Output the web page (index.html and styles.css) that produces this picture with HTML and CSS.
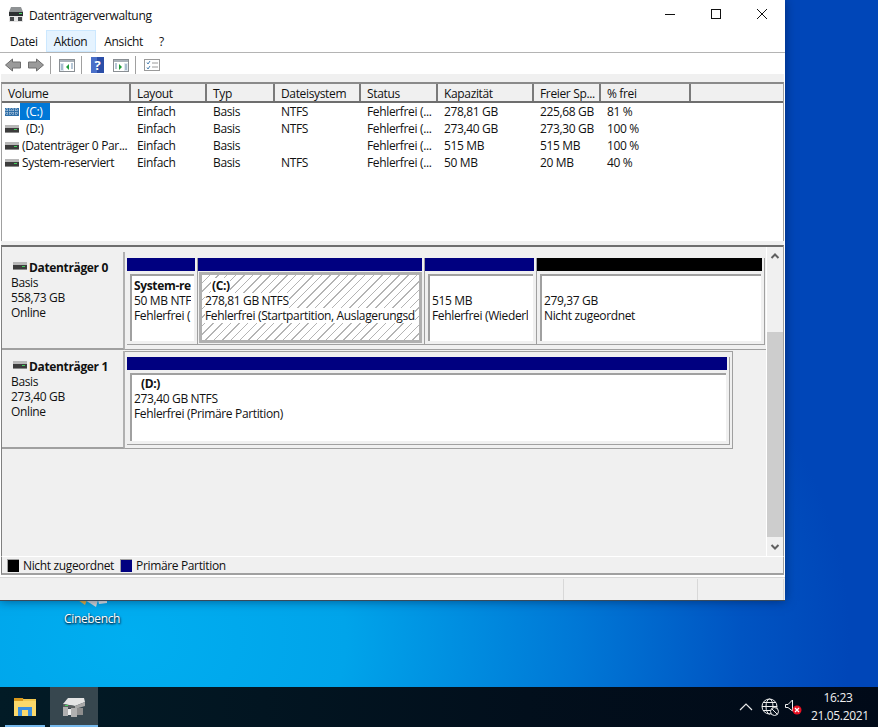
FILE: index.html
```html
<!DOCTYPE html>
<html lang="de">
<head>
    <title>Datenträgerverwaltung</title>
    <link rel="stylesheet" href="styles.css">
</head>
<body>
    <svg class="defs" width="0" height="0">
        <symbol id="drive" viewBox="0 0 14 8">
            <rect x="0" y="0" width="14" height="3" fill="#b8b8b8"/>
            <rect x="0" y="3" width="14" height="4" fill="#3c3c3c"/>
            <rect x="9" y="4" width="3" height="1" fill="#3fd05a"/>
            <rect x="0" y="7" width="14" height="1" fill="#8a8a8a"/>
        </symbol>
    </svg>

    <div class="desktop">
        <!-- Desktop icon behind the window -->
        <svg class="cine-icon" width="32" height="8" viewBox="0 0 32 8">
            <path d="M0 0 L7 5 L9 0Z" fill="#e8b040"/>
            <path d="M7 0 L18 7 L20 0Z" fill="#d8d8d8"/>
            <path d="M20 0 L21 4 L29 3 L29 0Z" fill="#e8e8e8"/>
        </svg>
        <div class="cine-label">Cinebench</div>

        <div class="window">
            <div class="titlebar">
                <svg class="app-icon" width="16" height="16" viewBox="0 0 16 16">
                    <path d="M3 0 H13 L15 5 H1Z" fill="#8f9294"/>
                    <rect x="1" y="5" width="14" height="4" fill="#2c2f31"/>
                    <rect x="11" y="6" width="3" height="1" fill="#42d860"/>
                    <rect x="1" y="9" width="14" height="6" fill="#e4e4e4"/>
                    <rect x="2" y="10" width="4" height="4" fill="#45484a"/>
                    <rect x="10" y="10" width="4" height="4" fill="#45484a"/>
                </svg>
                <span class="title-text">Datenträgerverwaltung</span>
                <div class="win-buttons">
                    <svg width="46" height="30" viewBox="0 0 46 30"><path d="M18 14.5 H28" stroke="#111" fill="none"/></svg>
                    <svg width="46" height="30" viewBox="0 0 46 30"><rect x="18.5" y="9.5" width="9" height="9" stroke="#111" fill="none"/></svg>
                    <svg width="46" height="30" viewBox="0 0 46 30"><path d="M18 9 L28 19 M28 9 L18 19" stroke="#111" fill="none"/></svg>
                </div>
            </div>

            <div class="menubar">
                <span class="menu-item">Datei</span>
                <span class="menu-item active">Aktion</span>
                <span class="menu-item">Ansicht</span>
                <span class="menu-item">?</span>
            </div>

            <div class="toolbar">
                <svg class="tool tool-back" width="16" height="14" viewBox="0 0 16 14"><path d="M0.5 7 L7.5 1 V4 H15.5 V10 H7.5 V13Z" fill="#9a9a9a" stroke="#6e6e6e"/></svg>
                <svg class="tool" width="16" height="14" viewBox="0 0 16 14"><path d="M15.5 7 L8.5 1 V4 H0.5 V10 H8.5 V13Z" fill="#9a9a9a" stroke="#6e6e6e"/></svg>
                <span class="tool-sep"></span>
                <svg class="tool" width="16" height="13" viewBox="0 0 16 13"><rect x="0.5" y="0.5" width="15" height="12" fill="#fff" stroke="#8a8f94"/><rect x="1" y="1" width="14" height="2" fill="#a9b2ba"/><rect x="1" y="4" width="4" height="8" fill="#dfe8ef"/><path d="M10 5 V11 L7 8Z" fill="#1f9d3a"/><path d="M12 5 H14 M12 7 H14 M12 9 H14 M2 6 H4 M2 8 H4 M2 10 H4" stroke="#6f8fae"/></svg>
                <span class="tool-sep"></span>
                <svg class="tool tool-help" width="13" height="16" viewBox="0 0 13 16"><rect width="13" height="16" fill="#2b4ea8"/><rect x="0" y="0" width="6" height="16" fill="#4a6fc8"/><text x="6.5" y="13" class="help-mark">?</text></svg>
                <svg class="tool" width="16" height="13" viewBox="0 0 16 13"><rect x="0.5" y="0.5" width="15" height="12" fill="#fff" stroke="#8a8f94"/><rect x="1" y="1" width="14" height="2" fill="#a9b2ba"/><rect x="11" y="4" width="4" height="8" fill="#dfe8ef"/><path d="M6 5 V11 L9 8Z" fill="#1f9d3a"/><path d="M2 5 H4 M2 7 H4 M2 9 H4 M12 6 H14 M12 8 H14 M12 10 H14" stroke="#6f8fae"/></svg>
                <span class="tool-sep"></span>
                <svg class="tool" width="16" height="12" viewBox="0 0 16 12"><rect x="0.5" y="0.5" width="15" height="11" fill="#fff" stroke="#9a9a9a"/><path d="M3 3.5 L4 5 L6 2 M3 8.5 L4 10 L6 7" stroke="#4a7fb0" fill="none"/><path d="M8 4 H14 M8 8 H14" stroke="#9a9a9a"/></svg>
            </div>

            <!-- Volume list -->
            <div class="volume-list">
                <div class="list-row list-head">
                    <div>Volume</div>
                    <div>Layout</div>
                    <div>Typ</div>
                    <div>Dateisystem</div>
                    <div>Status</div>
                    <div>Kapazität</div>
                    <div>Freier Sp...</div>
                    <div>% frei</div>
                    <div></div>
                </div>
                <div class="list-row">
                    <div class="vol-cell">
                        <svg class="vol-icon" width="14" height="8"><rect width="14" height="8" fill="#2f6fa8"/><path d="M0 2 H14 M0 5 H14 M2 0 V8 M5 0 V8 M8 0 V8 M11 0 V8" stroke="#c8d8e8" stroke-dasharray="1 1"/></svg>
                        <span class="vol-selected">(C:)</span>
                    </div>
                    <div>Einfach</div><div>Basis</div><div>NTFS</div><div>Fehlerfrei (...</div><div>278,81 GB</div><div>225,68 GB</div><div>81 %</div><div></div>
                </div>
                <div class="list-row">
                    <div class="vol-cell"><svg class="vol-icon" width="14" height="8"><use href="#drive"/></svg><span class="vol-name-drive">(D:)</span></div>
                    <div>Einfach</div><div>Basis</div><div>NTFS</div><div>Fehlerfrei (...</div><div>273,40 GB</div><div>273,30 GB</div><div>100 %</div><div></div>
                </div>
                <div class="list-row">
                    <div class="vol-cell"><svg class="vol-icon" width="14" height="8"><use href="#drive"/></svg><span class="vol-name">(Datenträger 0 Par...</span></div>
                    <div>Einfach</div><div>Basis</div><div></div><div>Fehlerfrei (...</div><div>515 MB</div><div>515 MB</div><div>100 %</div><div></div>
                </div>
                <div class="list-row">
                    <div class="vol-cell"><svg class="vol-icon" width="14" height="8"><use href="#drive"/></svg><span class="vol-name">System-reserviert</span></div>
                    <div>Einfach</div><div>Basis</div><div>NTFS</div><div>Fehlerfrei (...</div><div>50 MB</div><div>20 MB</div><div>40 %</div><div></div>
                </div>
            </div>

            <!-- Graphical disk view -->
            <div class="disk-view">
                <div class="disk-list">
                    <div class="disk-row">
                        <div class="disk-info">
                            <div class="disk-name"><svg width="14" height="8"><use href="#drive"/></svg><b>Datenträger 0</b></div>
                            <div>Basis</div>
                            <div>558,73 GB</div>
                            <div>Online</div>
                        </div>
                        <div class="disk-parts full">
                            <div class="part part-sys">
                                <div class="strip"></div>
                                <div class="part-body"><b>System-re</b><span>50 MB NTF</span><span>Fehlerfrei (</span></div>
                            </div>
                            <div class="part part-c selected">
                                <div class="strip"></div>
                                <div class="part-body"><b class="drive-letter">(C:)</b><span>278,81 GB NTFS</span><span>Fehlerfrei (Startpartition, Auslagerungsd</span></div>
                            </div>
                            <div class="part part-rec">
                                <div class="strip"></div>
                                <div class="part-body"><b>&nbsp;</b><span>515 MB</span><span>Fehlerfrei (Wiederl</span></div>
                            </div>
                            <div class="part part-free">
                                <div class="strip black"></div>
                                <div class="part-body"><b>&nbsp;</b><span>279,37 GB</span><span>Nicht zugeordnet</span></div>
                            </div>
                        </div>
                    </div>
                    <div class="disk-row">
                        <div class="disk-info">
                            <div class="disk-name"><svg width="14" height="8"><use href="#drive"/></svg><b>Datenträger 1</b></div>
                            <div>Basis</div>
                            <div>273,40 GB</div>
                            <div>Online</div>
                        </div>
                        <div class="disk-parts short">
                            <div class="part part-d">
                                <div class="strip"></div>
                                <div class="part-body"><b class="drive-letter">(D:)</b><span>273,40 GB NTFS</span><span>Fehlerfrei (Primäre Partition)</span></div>
                            </div>
                        </div>
                    </div>
                </div>
                <div class="scrollbar">
                    <svg width="16" height="17" viewBox="0 0 16 17"><path d="M4.5 11 L8 7.5 L11.5 11" stroke="#606060" stroke-width="2" fill="none"/></svg>
                    <div class="scroll-gap"></div>
                    <div class="scroll-thumb"></div>
                    <div class="scroll-rest"></div>
                    <svg width="16" height="17" viewBox="0 0 16 17"><path d="M4.5 6 L8 9.5 L11.5 6" stroke="#606060" stroke-width="2" fill="none"/></svg>
                </div>
            </div>

            <div class="legend">
                <span class="swatch black"></span><span class="legend-text">Nicht zugeordnet</span>
                <span class="swatch navy"></span><span class="legend-text">Primäre Partition</span>
            </div>

            <div class="statusbar">
                <div class="status-main"></div>
                <div class="status-mid"></div>
                <div class="status-end"></div>
            </div>
        </div>

        <!-- Taskbar -->
        <div class="taskbar">
            <div class="task task-explorer">
                <svg width="22" height="18" viewBox="0 0 22 18">
                    <path d="M0 0 H9 L10 3 H0Z" fill="#d8981c"/>
                    <rect x="9" y="1" width="13" height="2" fill="#f0c850"/>
                    <rect x="0" y="3" width="22" height="15" fill="#fbd96a"/>
                    <rect x="4" y="9" width="14" height="3" fill="#3a8fe0"/>
                    <rect x="4" y="12" width="4" height="6" fill="#3a8fe0"/>
                    <rect x="14" y="12" width="4" height="6" fill="#3a8fe0"/>
                </svg>
            </div>
            <div class="task task-active">
                <svg width="24" height="20" viewBox="0 0 24 20">
                    <path d="M6 1 H22 L23 5 L13 9 L1 7Z" fill="#e4e4e4"/>
                    <path d="M1 7 L13 9 V12 L1 10Z" fill="#5a5f60"/>
                    <rect x="3" y="8" width="3" height="1" fill="#42d860"/>
                    <path d="M13 9 L23 5 V9 L13 12Z" fill="#a8a8a8"/>
                    <path d="M1 10 H6 V19 H1Z M9 11 H15 V20 H9Z" fill="#b0b0b0"/>
                    <rect x="6" y="12" width="3" height="6" fill="#ececec"/>
                    <rect x="15" y="11" width="6" height="7" fill="#8e8e8e"/>
                </svg>
            </div>
            <div class="tray">
                <svg class="tray-chevron" width="14" height="8" viewBox="0 0 14 8"><path d="M1 7 L7 1 L13 7" stroke="#e8e8e8" stroke-width="1.2" fill="none"/></svg>
                <svg class="tray-globe" width="18" height="18" viewBox="0 0 18 18">
                    <g stroke="#f0f0f0" fill="none">
                        <circle cx="8.5" cy="8.5" r="7.5"/>
                        <ellipse cx="8.5" cy="8.5" rx="3.5" ry="7.5"/>
                        <path d="M1 8.5 H16 M2 4.5 H15 M2 12.5 H15"/>
                    </g>
                    <circle cx="13.5" cy="13.5" r="4" fill="#06101c" stroke="#f0f0f0"/>
                    <path d="M11 11 L16 16" stroke="#f0f0f0"/>
                </svg>
                <svg class="tray-sound" width="17" height="16" viewBox="0 0 17 16">
                    <path d="M0.5 5.5 H3 L7.5 1 V12 L3 8.5 H0.5Z" stroke="#f0f0f0" fill="none"/>
                    <circle cx="12" cy="11" r="4.5" fill="#e81123"/>
                    <path d="M10 9 L14 13 M14 9 L10 13" stroke="#fff" stroke-width="1.3"/>
                </svg>
                <div class="clock"><div>16:23</div><div>21.05.2021</div></div>
            </div>
        </div>
    </div>
</body>
</html>
```

FILE: styles.css
```css
/* Base styles */
* {
    box-sizing: border-box;
}

body {
    margin: 0;
    font-family: "Open Sans", "Noto Sans", sans-serif;
    font-size: 12px;
    letter-spacing: -0.35px;
    color: #111;
    overflow: hidden;
}

.defs {
    position: absolute;
}

/* Desktop */
.desktop {
    position: relative;
    width: 878px;
    height: 727px;
    background: radial-gradient(ellipse 720px 520px at 130px 640px, #00aef0 0%, #00a4ea 30%, #0078d6 62%, #0054c2 85%, #0046b8 100%) #0046b8;
    overflow: hidden;
}

.cine-icon {
    position: absolute;
    left: 78px;
    top: 600px;
}

.cine-label {
    position: absolute;
    left: 64px;
    top: 610px;
    color: #fff;
    text-shadow: 0 1px 2px #003050, 1px 1px 2px #003050;
}

/* Window */
.window {
    position: absolute;
    left: 0;
    top: 0;
    width: 785px;
    height: 601px;
    background: #fff;
    display: flex;
    flex-direction: column;
    box-shadow: 0 0 10px rgba(0, 20, 60, 0.55);
    border-bottom: 1px solid #3a4a5a;
}

.titlebar {
    height: 30px;
    display: flex;
    align-items: center;
    padding-left: 8px;
    flex: none;
}

.title-text {
    margin-left: 5px;
}

.win-buttons {
    margin-left: auto;
    display: flex;
}

.win-buttons svg {
    display: block;
}

.menubar {
    height: 23px;
    flex: none;
    display: flex;
    align-items: flex-start;
    padding-left: 2px;
    border-bottom: 1px solid #b4b4b4;
}

.menu-item {
    height: 22px;
    padding: 1px 7px 0;
    border: 1px solid transparent;
    line-height: 20px;
}

.menu-item.active {
    padding-right: 8px;
    background: #e5f3ff;
    border-color: #cce8ff;
}

.toolbar {
    height: 22px;
    flex: none;
    display: flex;
    align-items: center;
    padding: 2px 0 0 5px;
}

.tool {
    display: block;
    margin-right: 6px;
}

.tool-back {
    margin-right: 7px;
}

.tool-sep {
    width: 1px;
    height: 18px;
    background: #a0a0a0;
    margin: 0 8px 0 0;
}

.tool-help {
    margin-left: 1px;
    margin-right: 9px;
}

.help-mark {
    font-size: 13px;
    font-weight: 700;
    fill: #fff;
    text-anchor: middle;
}

/* Volume list */
.volume-list {
    margin: 7px 0 0 1px;
    width: 783px;
    height: 163px;
    flex: none;
    border: 1px solid #a0a0a0;
    border-top: 2px solid #8a8a8a;
    border-bottom: 0;
    box-shadow: 0 -8px 0 0 #f0f0f0;
    background: #fff;
}

.list-row {
    display: grid;
    grid-template-columns: 129px 76px 68px 86px 77px 96px 67px 90px 1fr;
    height: 17px;
    line-height: 17px;
}

.list-row > div {
    padding-left: 6px;
    white-space: nowrap;
    overflow: hidden;
}

.list-row > .vol-cell {
    padding-left: 3px;
    display: flex;
    align-items: center;
    overflow: visible;
}

.list-head {
    height: 19px;
    border-bottom: 2px solid #6e6e6e;
    grid-template-rows: 17px;
}

.list-head > div {
    background: #f0f0f0;
    border-right: 2px solid #7a7a7a;
    padding-top: 2px;
    line-height: 16px;
}

.list-head > div:last-child {
    border-right: 0;
}

.vol-icon {
    display: block;
    flex: none;
}

.vol-name {
    margin-left: 3px;
}

.vol-name-drive {
    margin-left: 7px;
}

.vol-selected {
    margin-left: 1px;
    width: 30px;
    padding-left: 6px;
    background: #0078d7;
    color: #fff;
}

/* Disk view */
.disk-view {
    margin-left: 1px;
    width: 783px;
    height: 311px;
    flex: none;
    display: flex;
    background: #f0f0f0;
    border-top: 2px solid #6e6e6e;
    border-left: 1px solid #808080;
    border-right: 1px solid #a0a0a0;
    box-shadow: 0 -4px 0 0 #f0f0f0;
}

.disk-list {
    width: 764px;
    padding-top: 5px;
    flex: none;
}

.disk-row {
    display: flex;
    height: 99px;
}

.disk-info {
    width: 123px;
    height: 98px;
    flex: none;
    padding: 8px 0 0 9px;
    line-height: 15px;
    border-right: 2px solid #b0b0b0;
    border-bottom: 2px solid #a0a0a0;
}

.disk-name {
    display: flex;
    align-items: center;
    gap: 2px;
    margin-left: 2px;
}

.disk-name svg {
    flex: none;
    margin-top: -3px;
}

.disk-parts {
    display: flex;
    height: 98px;
    padding: 6px 0 0 2px;
    border-bottom: 1px solid #a0a0a0;
}

.disk-parts.full {
    width: 641px;
}

.disk-parts.short {
    width: 608px;
    border: 1px solid #a0a0a0;
    border-left: 0;
    padding-top: 5px;
}

.part {
    height: 87px;
    display: flex;
    flex-direction: column;
    border-right: 1px solid #a0a0a0;
    border-bottom: 1px solid #a0a0a0;
    padding-right: 2px;
}

.part-sys { width: 71px; }
.part-c { width: 227px; }
.part-rec { width: 112px; }
.part-free { width: 228px; }
.part-d { width: 603px; height: 88px; }

.strip {
    height: 13px;
    flex: none;
    background: #000080;
}

.strip.black {
    background: #000;
}

.part-body {
    flex: 1;
    margin: 3px 1px 3px 3px;
    background: #fff;
    border-top: 2px solid #a0a0a0;
    border-left: 2px solid #a0a0a0;
    padding: 2px 5px 0 2px;
    display: flex;
    flex-direction: column;
    line-height: 15px;
    overflow: hidden;
    white-space: nowrap;
}

.part-body b,
.part-body span {
    display: block;
    overflow: hidden;
    flex: none;
}

.part-body b {
    font-weight: 700;
}

.part-body .drive-letter {
    padding-left: 7px;
}

.part-sys .part-body {
    padding-right: 3px;
}

.part-d .part-body {
    padding-top: 1px;
}

/* Selected partition: hatched with white text plates */
.part.selected .part-body {
    margin: 1px 0 1px 1px;
    border: 3px solid #b0b0b0;
    padding: 3px 3px 0 3px;
    background: repeating-linear-gradient(135deg, #fff 0, #fff 5.1px, #b4b4b4 5.1px, #b4b4b4 6.1px);
}

.part.selected .part-body b,
.part.selected .part-body span {
    align-self: flex-start;
    max-width: 100%;
    background: #fff;
}

.part.selected .part-body .drive-letter {
    margin-left: 6px;
    padding: 0 0 0 1px;
}

/* Scrollbar */
.scrollbar {
    width: 17px;
    flex: none;
    border-left: 1px solid #fff;
    display: flex;
    flex-direction: column;
}

.scrollbar svg {
    flex: none;
    display: block;
}

.scroll-gap {
    height: 68px;
    flex: none;
}

.scroll-thumb {
    height: 205px;
    flex: none;
    background: #cdcdcd;
}

.scroll-rest {
    flex: 1;
}

/* Legend and status */
.legend {
    margin-left: 1px;
    width: 783px;
    height: 19px;
    flex: none;
    display: flex;
    align-items: center;
    padding-left: 5px;
    background: #f0f0f0;
    border-top: 1px solid #fff;
    border-left: 1px solid #808080;
    border-right: 1px solid #a0a0a0;
    border-bottom: 2px solid #a0a0a0;
}

.swatch {
    width: 12px;
    height: 13px;
    border: 1px solid #a0a0a0;
    border-width: 1px 0 0 1px;
}

.swatch.black {
    background: #000;
}

.swatch.navy {
    background: #000080;
}

.legend-text {
    margin: 0 6px 0 4px;
}

.statusbar {
    flex: 1;
    display: flex;
    background: #f0f0f0;
    border-top: 2px solid #fff;
    box-shadow: inset 0 1px 0 #d8d8d8;
}

.status-main {
    width: 564px;
    border-right: 1px solid #d8d8d8;
    margin-top: 2px;
}

.status-mid {
    width: 134px;
    border-right: 1px solid #d8d8d8;
    margin-top: 2px;
}

.status-end {
    flex: 1;
    border-right: 1px solid #d8d8d8;
    margin: 2px 1px 0 0;
}

/* Taskbar */
.taskbar {
    position: absolute;
    left: 0;
    bottom: 0;
    width: 878px;
    height: 40px;
    display: flex;
    background: linear-gradient(90deg, #021b26 0%, #020f1c 60%, #010a18 100%);
}

.task {
    height: 40px;
    width: 48px;
    display: flex;
    align-items: center;
    justify-content: center;
    flex: none;
}

.task-explorer {
    margin-left: 2px;
    padding-right: 2px;
    background: linear-gradient(#76b9ed, #76b9ed) no-repeat 3px 38px / 40px 2px;
}

.task-active {
    background: linear-gradient(#76b9ed, #76b9ed) no-repeat 0 38px / 48px 2px, #37474f;
}

.tray {
    margin-left: auto;
    display: flex;
    align-items: center;
    color: #f0f0f0;
    padding-right: 13px;
}

.tray-chevron {
    margin-right: 8px;
}

.tray-globe {
    margin-right: 6px;
}

.tray-sound {
    margin-right: 9px;
}

.clock {
    text-align: center;
    line-height: 18px;
    width: 54px;
}
```
